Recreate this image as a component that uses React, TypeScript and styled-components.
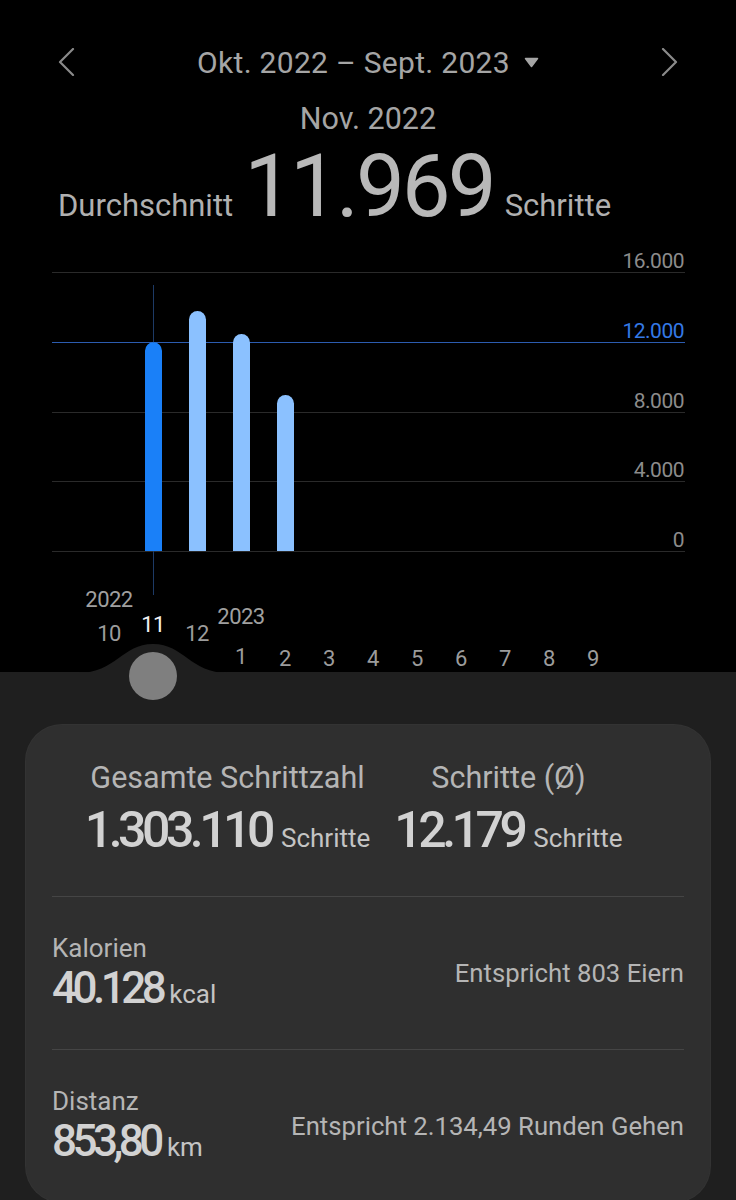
import React from 'react';
import styled, { createGlobalStyle } from 'styled-components';

const GlobalStyle = createGlobalStyle`
  body {
    margin: 0;
    background: #000;
    font-family: Roboto, "Noto Sans", sans-serif;
  }
`;

const Page = styled.div`
  width: 736px;
  height: 1200px;
  overflow: hidden;
  display: flex;
  flex-direction: column;
`;

const Top = styled.div`
  height: 672px;
  flex-shrink: 0;
  background: #000;
  display: flex;
  flex-direction: column;
`;

const NavRow = styled.div`
  display: flex;
  justify-content: space-between;
  align-items: center;
  height: 44px;
  padding: 40px 58px 0;
`;

const Title = styled.div`
  display: flex;
  align-items: center;
  gap: 14px;
  font-size: 30px;
  letter-spacing: 0.3px;
  color: #a5a5a5;
`;

const MonthLabel = styled.div`
  margin-top: 17px;
  text-align: center;
  font-size: 30.5px;
  line-height: 36px;
  color: #a5a5a5;
`;

const AvgRow = styled.div`
  margin-top: 6px;
  height: 87px;
  display: flex;
  align-items: baseline;
  gap: 11px;
  padding-left: 58px;
  color: #b0b0b0;
`;

const AvgCaption = styled.span`
  font-size: 31px;
`;

const AvgNumber = styled.span`
  font-size: 87px;
  line-height: 1;
  letter-spacing: -3px;
  color: #b8b8b8;
`;

const ChartSvg = styled.svg`
  display: block;
  margin-top: 10px;
  overflow: visible;
`;

const AxisRow = styled.div`
  height: 92px;
  display: flex;
  align-items: flex-end;
  padding-left: 87px;
  position: relative;
  z-index: 1;
`;

const AxisCol = styled.div<{ $lift: number }>`
  width: 44px;
  display: flex;
  flex-direction: column;
  align-items: center;
  padding-bottom: ${(p) => p.$lift}px;
  font-size: 22px;
  line-height: 24px;
  letter-spacing: -0.5px;
`;

const YearText = styled.span<{ $gap: number }>`
  color: #a0a0a0;
  margin-bottom: ${(p) => p.$gap}px;
`;

const MonthText = styled.span<{ $active: boolean }>`
  color: ${(p) => (p.$active ? '#f2f2f2' : '#9c9c9c')};
`;

const Panel = styled.div`
  flex: 1;
  position: relative;
  background: #1f1f1f;
  padding: 53px 26px 0;
`;

const Bump = styled.svg`
  position: absolute;
  top: -30px;
  left: 78px;
`;

const Knob = styled.div`
  position: absolute;
  top: -20px;
  left: 129px;
  width: 48px;
  height: 48px;
  border-radius: 50%;
  background: #7f7f7f;
`;

const Card = styled.div`
  background: #2f2f2f;
  border-radius: 36px;
  padding: 0 26px;
  box-shadow: 0 0 0 1px #333;
`;

const TotalsRow = styled.div`
  height: 171px;
  display: grid;
  grid-template-columns: 281px 281px;
  justify-content: center;
  align-content: center;
  text-align: center;
`;

const StatLabel = styled.div`
  font-size: 30.5px;
  line-height: 34px;
  color: #b5b5b5;
`;

const ValueLine = styled.div<{ $center?: boolean }>`
  display: flex;
  align-items: baseline;
  justify-content: ${(p) => (p.$center ? 'center' : 'flex-start')};
  gap: ${(p) => (p.$center ? 10 : 7)}px;
  margin-top: ${(p) => (p.$center ? 7 : 0)}px;
`;

const BigValue = styled.span<{ $size: number }>`
  font-size: ${(p) => p.$size}px;
  font-weight: 500;
  line-height: 1.15;
  letter-spacing: -4.5px;
  color: #d2d2d2;
`;

const Unit = styled.span`
  font-size: 26px;
  color: #c4c4c4;
`;

const InfoRow = styled.div`
  height: 152px;
  display: flex;
  justify-content: space-between;
  align-items: center;
  border-top: 1px solid #454545;
`;

const InfoLabel = styled.div`
  font-size: 26px;
  line-height: 30px;
  color: #b5b5b5;
`;

const InfoNote = styled.div`
  font-size: 25.7px;
  color: #b5b5b5;
`;

const GRID = [16000, 12000, 8000, 4000, 0];
const GOAL = 12000;

const yFor = (v: number) => 311 - (v / 16000) * 279;

interface IMonth {
  m: number;
  v: number;
  year?: string;
  yearGap?: number;
  lift: number;
}

const months: IMonth[] = [
  { m: 10, v: 0, year: '2022', yearGap: 10, lift: 26 },
  { m: 11, v: 11969, lift: 35 },
  { m: 12, v: 13763, lift: 26 },
  { m: 1, v: 12444, year: '2023', yearGap: 16, lift: 3 },
  { m: 2, v: 8946, lift: 1 },
  { m: 3, v: 0, lift: 1 },
  { m: 4, v: 0, lift: 1 },
  { m: 5, v: 0, lift: 1 },
  { m: 6, v: 0, lift: 1 },
  { m: 7, v: 0, lift: 1 },
  { m: 8, v: 0, lift: 1 },
  { m: 9, v: 0, lift: 1 },
];

const SELECTED = 1;
const colX = (i: number) => 109 + 44 * i;

function Chevron({ dir }: { dir: 'left' | 'right' }) {
  const pts = dir === 'left' ? '15,1 2,14 15,27' : '2,1 15,14 2,27';
  return (
    <svg width="17" height="28" viewBox="0 0 17 28">
      <polyline
        points={pts}
        fill="none"
        stroke="#8a8a8a"
        strokeWidth="2.2"
        strokeLinecap="round"
        strokeLinejoin="round"
      />
    </svg>
  );
}

function Chart() {
  return (
    <ChartSvg width="736" height="340" viewBox="0 0 736 340">
      {GRID.map((g) => {
        const y = Math.round(yFor(g)) + 0.5;
        const goal = g === GOAL;
        return (
          <g key={g}>
            <line
              x1="52"
              x2="685"
              y1={y}
              y2={y}
              stroke={goal ? '#2c5cb0' : '#2a2a2a'}
              strokeWidth="1"
            />
            <text
              x="684"
              y={y - 4.5}
              textAnchor="end"
              fontSize="21"
              letterSpacing="-0.5"
              fill={goal ? '#3479e6' : '#8c8c8c'}
              fontFamily="Roboto, sans-serif"
            >
              {g === 0 ? '0' : g.toLocaleString('de-DE')}
            </text>
          </g>
        );
      })}
      <line
        x1={colX(SELECTED) + 0.5}
        x2={colX(SELECTED) + 0.5}
        y1="45"
        y2="355"
        stroke="#1d3a66"
        strokeWidth="1"
      />
      {months.map((mo, i) => {
        if (!mo.v) return null;
        const w = 17;
        const r = w / 2;
        const x = colX(i) - r + 0.5;
        const top = yFor(mo.v);
        const bottom = yFor(0);
        const d = `M${x} ${bottom} V${top + r} A${r} ${r} 0 0 1 ${x + w} ${top + r} V${bottom} Z`;
        return (
          <path key={mo.m} d={d} fill={i === SELECTED ? '#1a80f8' : '#8bc1ff'} />
        );
      })}
    </ChartSvg>
  );
}

export default function App() {
  return (
    <Page>
      <GlobalStyle />
      <Top>
        <NavRow>
          <Chevron dir="left" />
          <Title>
            <span>Okt. 2022 – Sept. 2023</span>
            <svg width="15" height="11" viewBox="0 0 15 11">
              <path
                d="M1.5 1.5 H13.5 L7.5 9.5 Z"
                fill="#a5a5a5"
                stroke="#a5a5a5"
                strokeWidth="1.5"
                strokeLinejoin="round"
              />
            </svg>
          </Title>
          <Chevron dir="right" />
        </NavRow>
        <MonthLabel>Nov. 2022</MonthLabel>
        <AvgRow>
          <AvgCaption>Durchschnitt</AvgCaption>
          <AvgNumber>11.969</AvgNumber>
          <AvgCaption>Schritte</AvgCaption>
        </AvgRow>
        <Chart />
        <AxisRow>
          {months.map((mo, i) => (
            <AxisCol key={mo.m} $lift={mo.lift}>
              {mo.year && <YearText $gap={mo.yearGap ?? 10}>{mo.year}</YearText>}
              <MonthText $active={i === SELECTED}>{mo.m}</MonthText>
            </AxisCol>
          ))}
        </AxisRow>
      </Top>
      <Panel>
        <Bump width="150" height="31" viewBox="0 0 150 31">
          <path d="M0 31 C38 31 44 2 75 2 C106 2 112 31 150 31 Z" fill="#1f1f1f" />
        </Bump>
        <Knob />
        <Card>
          <TotalsRow>
            <div>
              <StatLabel>Gesamte Schrittzahl</StatLabel>
              <ValueLine $center>
                <BigValue $size={50}>1.303.110</BigValue>
                <Unit>Schritte</Unit>
              </ValueLine>
            </div>
            <div>
              <StatLabel>Schritte (Ø)</StatLabel>
              <ValueLine $center>
                <BigValue $size={50}>12.179</BigValue>
                <Unit>Schritte</Unit>
              </ValueLine>
            </div>
          </TotalsRow>
          <InfoRow>
            <div>
              <InfoLabel>Kalorien</InfoLabel>
              <ValueLine>
                <BigValue $size={44}>40.128</BigValue>
                <Unit>kcal</Unit>
              </ValueLine>
            </div>
            <InfoNote>Entspricht 803 Eiern</InfoNote>
          </InfoRow>
          <InfoRow>
            <div>
              <InfoLabel>Distanz</InfoLabel>
              <ValueLine>
                <BigValue $size={44}>853,80</BigValue>
                <Unit>km</Unit>
              </ValueLine>
            </div>
            <InfoNote>Entspricht 2.134,49 Runden Gehen</InfoNote>
          </InfoRow>
        </Card>
      </Panel>
    </Page>
  );
}
